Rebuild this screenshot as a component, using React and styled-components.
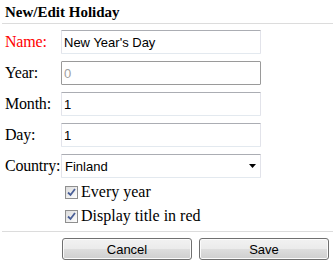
import React from 'react';
import styled, { createGlobalStyle } from 'styled-components';

const GlobalStyle = createGlobalStyle`
  body {
    margin: 0;
    background: #fff;
    font-family: 'Liberation Serif', 'Times New Roman', serif;
    color: #000;
  }
`;

const Dialog = styled.div`
  width: 331px;
  padding: 0 2px;
`;

const Title = styled.h3`
  margin: 0;
  padding: 3px 3px 0;
  height: 20px;
  font-size: 15px;
  line-height: 19px;
  font-weight: bold;
`;

const Rule = styled.div`
  height: 1px;
  background: #dcdcdc;
  margin-top: ${(p) => p.$top || 0}px;
`;

const Fields = styled.div`
  display: grid;
  grid-template-columns: 56px 200px;
  grid-auto-rows: 24px;
  row-gap: 7px;
  padding-left: 3px;
  margin-top: 6px;
`;

const Label = styled.label`
  display: flex;
  align-items: center;
  font-size: 16px;
  letter-spacing: -0.2px;
  color: ${(p) => (p.$required ? '#ff0000' : '#000')};
`;

const TextInput = styled.input`
  box-sizing: border-box;
  width: 200px;
  height: 24px;
  margin: 0;
  padding: 0 2px;
  font-family: 'Liberation Sans', Arial, sans-serif;
  font-size: 13px;
  color: #000;
  background: #fff;
  border: 1px solid;
  border-color: ${(p) =>
    p.$hover ? '#9a9a9a' : '#abadb3 #e2e3ea #e3e9ef #e2e3ea'};
  border-radius: 1px;
  outline: none;

  &::placeholder {
    color: #a0a0a0;
  }
`;

const SelectWrap = styled.div`
  position: relative;
  width: 200px;
  height: 24px;
`;

const Select = styled.select`
  box-sizing: border-box;
  appearance: none;
  width: 200px;
  height: 24px;
  margin: 0;
  padding: 0 3px;
  font-family: 'Liberation Sans', Arial, sans-serif;
  font-size: 13px;
  color: #000;
  background: #fff;
  border: 1px solid;
  border-color: #abadb3 #e2e3ea #e3e9ef #e2e3ea;
  border-radius: 1px;
  outline: none;
`;

const Arrow = styled.svg`
  position: absolute;
  right: 5px;
  top: 10px;
  pointer-events: none;
`;

const Checks = styled.div`
  display: flex;
  flex-direction: column;
  padding-left: 63px;
  margin-top: 2px;
`;

const CheckRow = styled.label`
  display: flex;
  align-items: center;
  gap: 3px;
  height: 24px;
  font-size: 16px;
`;

const HiddenInput = styled.input`
  display: none;
`;

const Box = styled.span`
  box-sizing: border-box;
  width: 13px;
  height: 13px;
  border: 1px solid #8f8f8f;
  background: linear-gradient(135deg, #dcdcdc 0%, #f4f4f4 70%, #fff 100%);
  display: flex;
  align-items: center;
  justify-content: center;
`;

const Buttons = styled.div`
  display: flex;
  gap: 7px;
  padding-left: 60px;
  margin-top: 6px;
`;

const Button = styled.button`
  box-sizing: border-box;
  width: 130px;
  height: 22px;
  margin: 0;
  padding: 0;
  font-family: 'Liberation Sans', Arial, sans-serif;
  font-size: 13px;
  color: #000;
  border: 1px solid #707070;
  border-radius: 3px;
  background: linear-gradient(#f2f2f2 0%, #ebebeb 48%, #dddddd 52%, #cfcfcf 100%);
  box-shadow: inset 0 0 0 1px #fbfbfb;
`;

const CheckMark = () => (
  <svg width="9" height="9" viewBox="0 0 9 9">
    <path d="M1 4.5 L3.5 7 L8 1" fill="none" stroke="#4a5f97" strokeWidth="1.8" />
  </svg>
);

const Check = ({ children }) => (
  <CheckRow>
    <HiddenInput type="checkbox" defaultChecked />
    <Box>
      <CheckMark />
    </Box>
    {children}
  </CheckRow>
);

const App = () => {
  return (
    <>
      <GlobalStyle />
      <Dialog>
        <Title>New/Edit Holiday</Title>
        <Rule $top={0} />
        <Fields>
          <Label $required>Name:</Label>
          <TextInput defaultValue="New Year's Day" />
          <Label>Year:</Label>
          <TextInput $hover placeholder="0" />
          <Label>Month:</Label>
          <TextInput defaultValue="1" />
          <Label>Day:</Label>
          <TextInput defaultValue="1" />
          <Label>Country:</Label>
          <SelectWrap>
            <Select defaultValue="Finland">
              <option>Finland</option>
              <option>Sweden</option>
              <option>Norway</option>
            </Select>
            <Arrow width="7" height="4" viewBox="0 0 7 4">
              <polygon points="0,0 7,0 3.5,4" fill="#000" />
            </Arrow>
          </SelectWrap>
        </Fields>
        <Checks>
          <Check>Every year</Check>
          <Check>Display title in red</Check>
        </Checks>
        <Rule $top={3} />
        <Buttons>
          <Button>Cancel</Button>
          <Button>Save</Button>
        </Buttons>
      </Dialog>
    </>
  );
};

export default App;
